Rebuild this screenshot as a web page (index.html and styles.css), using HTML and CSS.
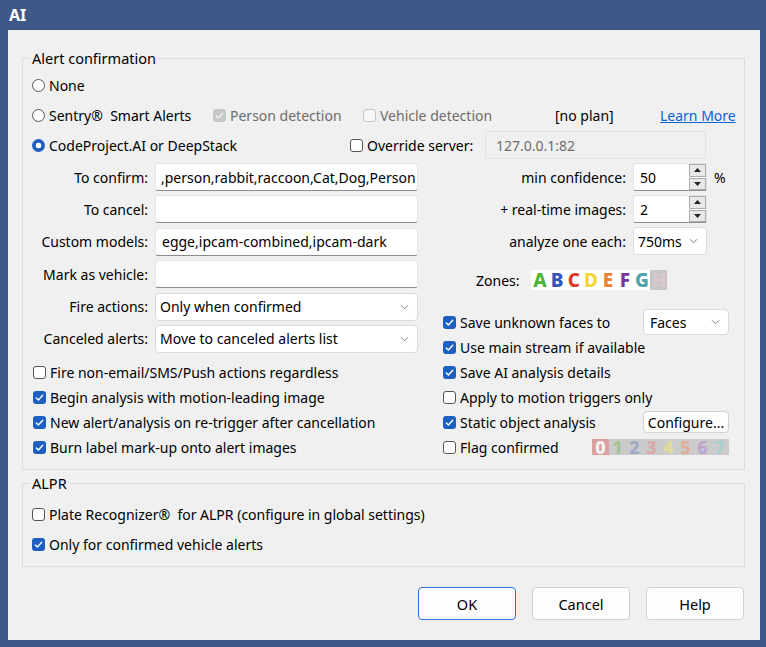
FILE: index.html
```html
<!DOCTYPE html>
<html lang="en">
<head>
<meta charset="utf-8">
<title>AI</title>
<link rel="stylesheet" href="styles.css">
</head>
<body>
<div class="titlebar"><span class="title">AI</span></div>
<div class="dialog">
  <fieldset class="group group-main">
    <legend>Alert confirmation</legend>
    <div class="row">
      <label class="opt"><span class="radio"></span>None</label>
    </div>
    <div class="row">
      <label class="opt w-sentry"><span class="radio"></span>Sentry®&nbsp; Smart Alerts</label>
      <label class="opt dis w-person"><span class="cb cb-dis on"><svg viewBox="0 0 13 13"><path d="M3.3 6.9l2.1 2.1 4.3-4.7"/></svg></span>Person detection</label>
      <label class="opt dis w-vehicle"><span class="cb cb-dis"></span>Vehicle detection</label>
      <span class="noplan">[no plan]</span>
      <a class="link" href="#">Learn More</a>
    </div>
    <div class="row">
      <label class="opt w-cp"><span class="radio on"></span>CodeProject.AI or DeepStack</label>
      <label class="opt w-override"><span class="cb"></span>Override server:</label>
      <div class="field field-dis w-server">127.0.0.1:82</div>
    </div>

    <div class="cols">
      <div class="col-left">
        <div class="form-grid">
          <span class="flabel">To confirm:</span>
          <div class="field field-confirm">,person,rabbit,raccoon,Cat,Dog,Person</div>
          <span class="flabel">To cancel:</span>
          <div class="field"></div>
          <span class="flabel">Custom models:</span>
          <div class="field">egge,ipcam-combined,ipcam-dark</div>
          <span class="flabel">Mark as vehicle:</span>
          <div class="field"></div>
          <span class="flabel">Fire actions:</span>
          <div class="select"><span>Only when confirmed</span><svg class="chev" viewBox="0 0 10 6"><path d="M1 1l4 4 4-4"/></svg></div>
          <span class="flabel">Canceled alerts:</span>
          <div class="select"><span>Move to canceled alerts list</span><svg class="chev" viewBox="0 0 10 6"><path d="M1 1l4 4 4-4"/></svg></div>
        </div>
        <div class="cblist cblist-left">
          <label class="opt crow"><span class="cb"></span>Fire non-email/SMS/Push actions regardless</label>
          <label class="opt crow"><span class="cb on"><svg viewBox="0 0 13 13"><path d="M3.3 6.9l2.1 2.1 4.3-4.7"/></svg></span>Begin analysis with motion-leading image</label>
          <label class="opt crow"><span class="cb on"><svg viewBox="0 0 13 13"><path d="M3.3 6.9l2.1 2.1 4.3-4.7"/></svg></span>New alert/analysis on re-trigger after cancellation</label>
          <label class="opt crow"><span class="cb on"><svg viewBox="0 0 13 13"><path d="M3.3 6.9l2.1 2.1 4.3-4.7"/></svg></span>Burn label mark-up onto alert images</label>
        </div>
      </div>

      <div class="col-right">
        <div class="spin-grid">
          <span class="flabel">min confidence:</span>
          <div class="spin"><span class="spin-val">50</span><span class="spin-btns"><span class="sb"><svg viewBox="0 0 7 4"><path d="M3.5 0L7 4H0z"/></svg></span><span class="sb"><svg viewBox="0 0 7 4"><path d="M0 0h7L3.5 4z"/></svg></span></span></div>
          <span class="unit">%</span>
          <span class="flabel">+ real-time images:</span>
          <div class="spin"><span class="spin-val">2</span><span class="spin-btns"><span class="sb"><svg viewBox="0 0 7 4"><path d="M3.5 0L7 4H0z"/></svg></span><span class="sb"><svg viewBox="0 0 7 4"><path d="M0 0h7L3.5 4z"/></svg></span></span></div>
          <span></span>
          <span class="flabel">analyze one each:</span>
          <div class="select select-sm"><span>750ms</span><svg class="chev" viewBox="0 0 10 6"><path d="M1 1l4 4 4-4"/></svg></div>
          <span></span>
        </div>
        <div class="zones">
          <span>Zones:</span>
          <div class="zone-box">
            <span class="z za">A</span><span class="z zb">B</span><span class="z zc">C</span><span class="z zd">D</span><span class="z ze">E</span><span class="z zf">F</span><span class="z zg">G</span><span class="z zh">H</span>
          </div>
        </div>
        <div class="cblist cblist-right">
          <div class="crow rrow">
            <label class="opt"><span class="cb on"><svg viewBox="0 0 13 13"><path d="M3.3 6.9l2.1 2.1 4.3-4.7"/></svg></span>Save unknown faces to</label>
            <div class="select select-faces"><span>Faces</span><svg class="chev" viewBox="0 0 10 6"><path d="M1 1l4 4 4-4"/></svg></div>
          </div>
          <div class="crow rrow">
            <label class="opt"><span class="cb on"><svg viewBox="0 0 13 13"><path d="M3.3 6.9l2.1 2.1 4.3-4.7"/></svg></span>Use main stream if available</label>
          </div>
          <div class="crow rrow">
            <label class="opt"><span class="cb on"><svg viewBox="0 0 13 13"><path d="M3.3 6.9l2.1 2.1 4.3-4.7"/></svg></span>Save AI analysis details</label>
          </div>
          <div class="crow rrow">
            <label class="opt"><span class="cb"></span>Apply to motion triggers only</label>
          </div>
          <div class="crow rrow">
            <label class="opt"><span class="cb on"><svg viewBox="0 0 13 13"><path d="M3.3 6.9l2.1 2.1 4.3-4.7"/></svg></span>Static object analysis</label>
            <button class="btn btn-config" type="button">Configure...</button>
          </div>
          <div class="crow rrow">
            <label class="opt"><span class="cb"></span>Flag confirmed</label>
            <div class="digits">
              <span class="d d0">0</span><span class="d d1">1</span><span class="d d2">2</span><span class="d d3">3</span><span class="d d4">4</span><span class="d d5">5</span><span class="d d6">6</span><span class="d d7">7</span>
            </div>
          </div>
        </div>
      </div>
    </div>
  </fieldset>

  <fieldset class="group group-alpr">
    <legend>ALPR</legend>
    <div class="row">
      <label class="opt"><span class="cb"></span>Plate Recognizer®&nbsp; for ALPR (configure in global settings)</label>
    </div>
    <div class="row">
      <label class="opt"><span class="cb on"><svg viewBox="0 0 13 13"><path d="M3.3 6.9l2.1 2.1 4.3-4.7"/></svg></span>Only for confirmed vehicle alerts</label>
    </div>
  </fieldset>

  <div class="buttons">
    <button class="btn btn-dlg btn-ok" type="button">OK</button>
    <button class="btn btn-dlg" type="button">Cancel</button>
    <button class="btn btn-dlg" type="button">Help</button>
  </div>
</div>
</body>
</html>
```

FILE: styles.css
```css
* { box-sizing: border-box; }
html, body { margin: 0; padding: 0; }
body {
  background: #3e5987;
  font-family: "Noto Sans", "Open Sans", sans-serif;
  font-size: 14px;
  color: #000;
  width: 766px;
  height: 647px;
  overflow: hidden;
}
.titlebar {
  height: 30px;
  display: flex;
  align-items: center;
  padding-left: 9px;
}
.title { color: #fff; font-weight: 700; font-size: 16px; }

.dialog {
  margin: 0 6px 0 8px;
  height: 610px;
  background: #f0f0f0;
  padding: 0 15px 0 14px;
  display: flex;
  flex-direction: column;
}

.group {
  margin: 0;
  padding: 0;
  border: 1px solid #dcdcdc;
  min-width: 0;
}
.group legend {
  margin-left: 7px;
  padding: 0 2px;
  line-height: 20px;
  font-size: 14.5px;
}
.group-main { margin-top: 18px; padding-top: 2px; padding-bottom: 9px; }
.group-alpr { margin-top: 3px; padding-top: 6px; padding-bottom: 7px; }

.row {
  height: 30px;
  display: flex;
  align-items: center;
  padding-left: 9px;
}
.opt {
  display: flex;
  align-items: center;
  white-space: nowrap;
}
.dis { color: #6d6d6d; }
.w-sentry { width: 181px; }
.w-person { width: 150px; }
.w-vehicle { width: 192px; }
.noplan { width: 105px; }
.link { color: #0b62d0; text-decoration: underline; }
.w-cp { width: 318px; }
.w-override { width: 135px; }
.w-server { width: 221px; height: 28px; }

.radio {
  width: 13px;
  height: 13px;
  border: 1px solid #555;
  border-radius: 50%;
  margin-right: 4px;
  background: #fff;
  flex: none;
}
.radio.on {
  border: none;
  background: radial-gradient(circle, #fff 0 2.6px, #1c5fc0 3.2px);
}

.cb {
  width: 13px;
  height: 13px;
  border: 1px solid #555;
  border-radius: 3px;
  margin-right: 4px;
  background: #fff;
  flex: none;
  display: flex;
}
.cb svg { width: 13px; height: 13px; }
.cb path { fill: none; stroke: #fff; stroke-width: 1.4; stroke-linecap: round; stroke-linejoin: round; }
.cb.on { background: #1c5fc0; border: none; }
.cb-dis { border-color: #c4c4c4; background: #f7f7f7; }
.cb-dis.on { background: #c6c6c6; border: none; }
.cb-dis.on path { stroke: #f2f2f2; }

.field {
  height: 28px;
  background: #fff;
  border: 1px solid #e4e4e4;
  border-bottom-color: #8c8c8c;
  border-radius: 3px;
  padding: 0 6px;
  display: flex;
  align-items: center;
  overflow: hidden;
  white-space: nowrap;
}
.field-confirm { padding-left: 5px; }
.field-dis {
  background: #f0f0f0;
  border: 1px solid #e2e2e2;
  color: #6d6d6d;
  padding-left: 10px;
}

.select {
  height: 28px;
  background: #fff;
  border: 1px solid #dadada;
  border-radius: 4px;
  padding: 0 8px 0 4px;
  display: flex;
  align-items: center;
  justify-content: space-between;
  white-space: nowrap;
}
.chev { width: 9px; height: 6px; flex: none; }
.chev path { fill: none; stroke: #707070; stroke-width: 1; }

.cols { display: flex; margin-top: 3px; }
.col-left { width: 407px; flex: none; }
.col-right { flex: 1; }

.form-grid {
  display: grid;
  grid-template-columns: 125px 263px;
  grid-auto-rows: 28px;
  column-gap: 7px;
  row-gap: 4.4px;
}
.flabel { text-align: right; align-self: center; white-space: nowrap; }

.cblist-left { margin-top: 7.5px; padding-left: 10px; }
.crow { height: 25px; }

.spin-grid {
  display: grid;
  grid-template-columns: 196px 74px auto;
  grid-auto-rows: 28px;
  column-gap: 7px;
  row-gap: 4px;
}
.unit { align-self: center; }
.spin {
  display: flex;
  background: #fff;
  border: 1px solid #e4e4e4;
  border-bottom-color: #8c8c8c;
  border-radius: 3px 0 0 3px;
}
.spin-val { flex: 1; display: flex; align-items: center; padding-left: 6px; }
.spin-btns { width: 17px; display: flex; flex-direction: column; gap: 1px; background: #fff; }
.sb {
  flex: 1;
  background: #e8e8e8;
  border: 1px solid #adadad;
  display: flex;
  align-items: center;
  justify-content: center;
}
.sb svg { width: 7px; height: 4px; }
.sb path { fill: #222; }
.select-sm { padding-left: 4px; }

.zones {
  display: flex;
  align-items: center;
  gap: 12px;
  padding-left: 46px;
  margin-top: 15px;
  height: 20px;
}
.zone-box { display: flex; background: #fff; height: 20px; }
.z {
  width: 17px;
  height: 20px;
  display: flex;
  align-items: center;
  justify-content: center;
  font-weight: 800;
  font-size: 19px;
  line-height: 1;
}
.za { color: #4fb63a; }
.zb { color: #3452b8; }
.zc { color: #d83b2a; }
.zd { color: #f4d63a; }
.ze { color: #e98236; }
.zf { color: #74379c; }
.zg { color: #4aa3a9; }
.zh { color: #dcc6d2; background: #c6c6c6; }

.cblist-right { margin-top: 19.5px; padding-left: 13px; padding-right: 15px; }
.rrow { display: flex; align-items: center; justify-content: space-between; }
.select-faces { width: 86px; height: 26px; padding-left: 6px; }

.btn {
  font-family: inherit;
  font-size: 14px;
  color: #000;
  background: #fdfdfd;
  border: 1px solid #d2d2d2;
  border-radius: 4px;
  padding: 0;
}
.btn-config { width: 86px; height: 22px; }

.digits { display: flex; background: #cbcbcb; height: 16px; width: 137px; }
.d {
  width: 17px;
  height: 16px;
  display: flex;
  align-items: center;
  justify-content: center;
  font-weight: 800;
  font-size: 18px;
  line-height: 1;
}
.d0 { background: #dca0a0; color: #f4f4f4; }
.d1 { color: #a3c594; }
.d2 { color: #9eabc8; }
.d3 { color: #dba7a7; }
.d4 { color: #e2dc98; }
.d5 { color: #e2ac98; }
.d6 { color: #bca6cf; }
.d7 { color: #a7cfcf; }

.buttons {
  display: flex;
  justify-content: flex-end;
  gap: 16px;
  padding-right: 1px;
  margin-top: 20px;
}
.btn-dlg { width: 98px; height: 33px; font-size: 14.5px; }
.btn-ok { border-color: #2a72d4; }
```
